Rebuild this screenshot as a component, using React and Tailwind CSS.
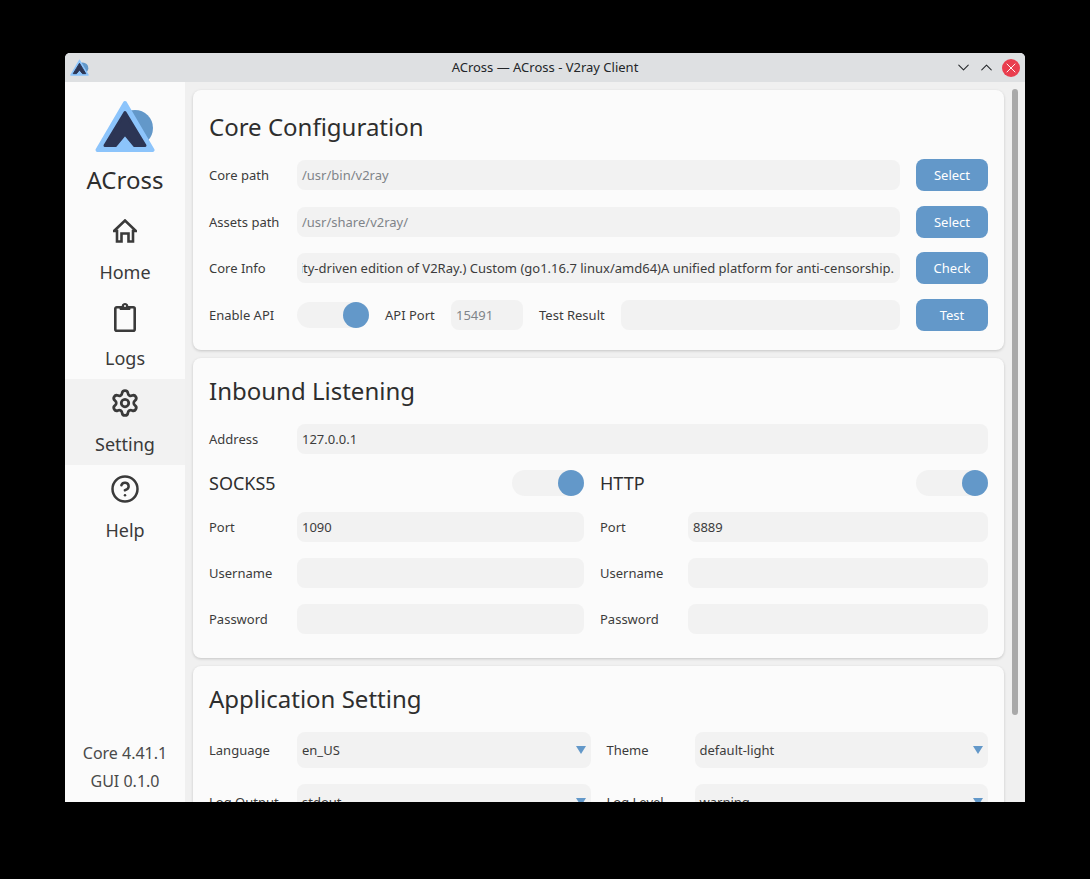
import { CircleHelp, Settings, ChevronDown, ChevronUp, X } from 'lucide-react'

const Logo = ({ className }) => (
  <svg viewBox="0 0 60 54" className={className}>
    <circle cx="40" cy="29" r="18" fill="#6398c9" />
    <path d="M30 4 L57.5 51 L2.5 51 Z" fill="#8cc4fb" stroke="#8cc4fb" strokeWidth="4" strokeLinejoin="round" />
    <path d="M30 13.5 L50 46.5 L39.5 46.5 L30 35 L20.5 46.5 L10 46.5 Z" fill="#2c3554" stroke="#2c3554" strokeWidth="3" strokeLinejoin="round" />
  </svg>
)

const HomeIcon = () => (
  <svg viewBox="0 0 24 24" className="w-[24px] h-[24px]" fill="none" stroke="#3a3a3a" strokeWidth="2.6" strokeLinejoin="miter">
    <path d="M1 12 L12 1.5 L23 12 H20 V22.5 H15.5 V14.5 H8.5 V22.5 H4 V12 Z" />
  </svg>
)

const ClipboardIcon = () => (
  <svg viewBox="0 0 22 30" className="w-[22px] h-[30px]" fill="none" stroke="#3a3a3a" strokeWidth="2.6" strokeLinejoin="round">
    <rect x="1.3" y="5.3" width="19.4" height="23.4" rx="1.5" />
    <path d="M6 7.5 V4.5 H8 A3 3 0 0 1 14 4.5 H16 V7.5 Z" fill="#3a3a3a" strokeWidth="1" />
    <circle cx="11" cy="4" r="1" fill="#fbfbfb" stroke="none" />
  </svg>
)

const NavItem = ({ icon, label, active }) => (
  <div className={`h-[86px] flex flex-col items-center ${active ? 'bg-[#f2f2f2]' : ''}`}>
    <div className="h-[48px] flex items-center justify-center">{icon}</div>
    <div className="text-[18px] leading-[34px] text-[#3a3a3a]">{label}</div>
  </div>
)

const Field = ({ value, muted, className = '' }) => (
  <div className={`h-[30px] bg-[#f2f2f2] rounded-lg px-[5px] pt-[2px] flex items-center text-[13px] whitespace-nowrap ${muted ? 'text-[#7f8489]' : 'text-[#3c3c3c]'} ${className}`}>
    {value}
  </div>
)

const Label = ({ children, className = 'w-[88px]' }) => (
  <div className={`pt-[2px] text-[13px] text-[#3c3c3c] shrink-0 ${className}`}>{children}</div>
)

const Toggle = () => (
  <div className="w-[72px] h-[26px] bg-[#f2f2f2] rounded-full flex justify-end shrink-0">
    <div className="w-[26px] h-[26px] rounded-full bg-[#6398c9]" />
  </div>
)

const Btn = ({ children }) => (
  <div className="w-[72px] h-[32px] pt-[2px] rounded-lg bg-[#6398c9] text-white text-[13px] flex items-center justify-center shrink-0">
    {children}
  </div>
)

const Title = ({ children }) => (
  <h2 className="h-[42px] flex items-center text-[24px] text-[#2e2e2e]">{children}</h2>
)

const Card = ({ children, className = '' }) => (
  <div className={`bg-[#fbfbfb] rounded-lg shadow-[0_1px_3px_rgba(0,0,0,0.18)] px-4 shrink-0 ${className}`}>
    {children}
  </div>
)

const PathRow = ({ label, value, muted, button, className = '' }) => (
  <div className={`h-[32px] flex items-center ${className}`}>
    <Label>{label}</Label>
    <Field value={value} muted={muted} className="flex-1" />
    <div className="ml-4"><Btn>{button}</Btn></div>
  </div>
)

const ProxyColumn = ({ name, port }) => (
  <div className="flex-1">
    <div className="h-[26px] flex items-center justify-between">
      <div className="text-[18px] text-[#2e2e2e]">{name}</div>
      <Toggle />
    </div>
    <div className="mt-4 flex flex-col gap-4">
      <div className="flex items-center"><Label>Port</Label><Field value={port} className="flex-1" /></div>
      <div className="flex items-center"><Label>Username</Label><Field className="flex-1" /></div>
      <div className="flex items-center"><Label>Password</Label><Field className="flex-1" /></div>
    </div>
  </div>
)

const Select = ({ label, value }) => (
  <div className="flex-1 flex items-center">
    <Label>{label}</Label>
    <div className="flex-1 h-[36px] bg-[#f2f2f2] rounded-lg px-[5px] flex items-center justify-between text-[13px] text-[#3c3c3c]">
      <span className="pt-[2px]">{value}</span>
      <svg viewBox="0 0 10 8" className="w-[10px] h-[8px]"><path d="M0 0 H10 L5 8 Z" fill="#6398c9" /></svg>
    </div>
  </div>
)

export default function App() {
  return (
    <div className="w-[1090px] h-[879px] bg-black pt-[53px] pl-[65px] font-['Noto_Sans',sans-serif]">
      <div className="w-[960px] h-[749px] rounded-t-[5px] overflow-hidden flex flex-col bg-[#f0f0f0]">
        <div className="h-[29px] shrink-0 bg-[#dee0e2] flex items-center px-[5px] relative">
          <Logo className="w-[19px] h-[17px]" />
          <div className="absolute inset-0 flex items-center justify-center text-[13px] text-[#232629]">
            ACross — ACross - V2ray Client
          </div>
          <div className="ml-auto flex items-center relative">
            <ChevronDown size={19} strokeWidth={1.3} className="text-[#232629]" />
            <ChevronUp size={19} strokeWidth={1.3} className="text-[#232629] ml-[4px]" />
            <div className="ml-[6px] w-[18px] h-[18px] rounded-full bg-[#e93d4e] flex items-center justify-center">
              <X size={16} strokeWidth={1.4} className="text-white" />
            </div>
          </div>
        </div>

        <div className="flex-1 flex min-h-0">
          <aside className="w-[120px] shrink-0 bg-[#fbfbfb] flex flex-col">
            <div className="h-[125px] flex flex-col items-center pt-[17px]">
              <Logo className="w-[60px] h-[54px]" />
              <div className="text-[24px] leading-[33px] mt-[10px] text-[#2e2e2e]">ACross</div>
            </div>
            <NavItem icon={<HomeIcon />} label="Home" />
            <NavItem icon={<ClipboardIcon />} label="Logs" />
            <NavItem active icon={<Settings size={30} strokeWidth={2.2} className="text-[#3a3a3a]" />} label="Setting" />
            <NavItem icon={<CircleHelp size={30} strokeWidth={2} className="text-[#3a3a3a]" />} label="Help" />
            <div className="mt-auto pb-[7px] text-center text-[16px] leading-[28px] text-[#4a4a4a]">
              <div>Core 4.41.1</div>
              <div>GUI 0.1.0</div>
            </div>
          </aside>

          <main className="flex-1 min-w-0 flex overflow-hidden">
            <div className="w-[811px] ml-2 mt-2 flex flex-col gap-2 shrink-0">
              <Card className="h-[260px] pt-4">
                <Title>Core Configuration</Title>
                <PathRow className="mt-[11px]" label="Core path" value="/usr/bin/v2ray" muted button="Select" />
                <PathRow className="mt-[15px]" label="Assets path" value="/usr/share/v2ray/" muted button="Select" />
                <div className="mt-[14px] h-[32px] flex items-center">
                  <Label>Core Info</Label>
                  <div className="flex-1 min-w-0 h-[30px] bg-[#f2f2f2] rounded-lg pl-[5px] pr-[6px] pt-[2px] flex items-center text-[13px] text-[#3c3c3c]">
                    <div className="w-full overflow-hidden flex justify-end whitespace-nowrap">
                      <span className="shrink-0">V2Ray 4.41.1 (V2Fly, a community-driven edition of V2Ray.) Custom (go1.16.7 linux/amd64)A unified platform for anti-censorship.</span>
                    </div>
                  </div>
                  <div className="ml-4"><Btn>Check</Btn></div>
                </div>
                <div className="mt-[15px] h-[32px] flex items-center">
                  <Label>Enable API</Label>
                  <Toggle />
                  <Label className="ml-4 w-[66px]">API Port</Label>
                  <Field value="15491" muted className="w-[72px]" />
                  <Label className="ml-4 w-[82px]">Test Result</Label>
                  <Field className="flex-1" />
                  <div className="ml-4"><Btn>Test</Btn></div>
                </div>
              </Card>

              <Card className="h-[300px] pt-3">
                <Title>Inbound Listening</Title>
                <div className="mt-3 flex items-center">
                  <Label>Address</Label>
                  <Field value="127.0.0.1" className="flex-1" />
                </div>
                <div className="mt-4 flex gap-4">
                  <ProxyColumn name="SOCKS5" port="1090" />
                  <div className="w-[388px]">
                    <ProxyColumn name="HTTP" port="8889" />
                  </div>
                </div>
              </Card>

              <Card className="h-[300px] pt-3">
                <Title>Application Setting</Title>
                <div className="mt-3 flex flex-col gap-4">
                  <div className="flex gap-4">
                    <Select label="Language" value="en_US" />
                    <Select label="Theme" value="default-light" />
                  </div>
                  <div className="flex gap-4">
                    <Select label="Log Output" value="stdout" />
                    <Select label="Log Level" value="warning" />
                  </div>
                </div>
              </Card>
            </div>
            <div className="ml-2 mt-[7px] w-[6px] h-[626px] rounded-full bg-[#a9a9a9] shrink-0" />
          </main>
        </div>
      </div>
    </div>
  )
}
